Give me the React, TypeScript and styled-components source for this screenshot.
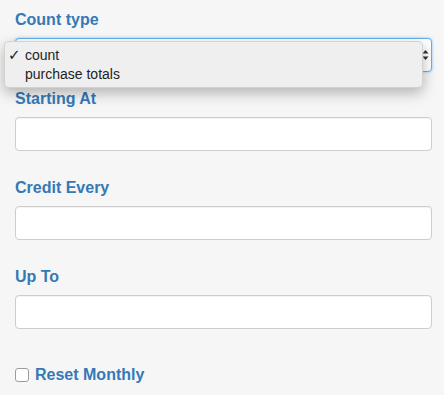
import styled, { createGlobalStyle } from 'styled-components';

const GlobalStyle = createGlobalStyle`
  html, body {
    margin: 0;
    padding: 0;
    background: #f6f6f6;
  }
  body {
    font-family: "Liberation Sans", Arial, sans-serif;
  }
`;

const Page = styled.form`
  position: relative;
  width: 444px;
  height: 395px;
  box-sizing: border-box;
  padding: 10px 12px 0 15px;
  display: flex;
  flex-direction: column;
`;

const Group = styled.div<{ $gap: number }>`
  display: flex;
  flex-direction: column;
  margin-bottom: ${(p) => p.$gap}px;
`;

const Label = styled.label`
  font-size: 16px;
  line-height: 20px;
  font-weight: 700;
  color: #3479b7;
  margin-bottom: 8px;
`;

const Input = styled.input`
  box-sizing: border-box;
  height: 34px;
  width: 100%;
  border: 1px solid #cdcdcd;
  border-radius: 4px;
  background: #fff;
  box-shadow: inset 0 1px 1px rgba(0, 0, 0, 0.05);
  outline: none;
`;

const SelectBox = styled.div`
  position: relative;
  box-sizing: border-box;
  height: 34px;
  width: 100%;
  border: 1px solid #66afe9;
  border-radius: 4px;
  background: #fff;
  box-shadow: 0 0 3px rgba(102, 175, 233, 0.7);
`;

const Arrows = styled.svg`
  position: absolute;
  right: 2px;
  top: 10px;
`;

const Menu = styled.ul`
  position: absolute;
  left: 4px;
  top: 41px;
  width: 419px;
  height: 47px;
  box-sizing: border-box;
  margin: 0;
  padding: 4px 0 0;
  list-style: none;
  background: #efefef;
  border: 1px solid rgba(0, 0, 0, 0.12);
  border-radius: 5px;
  box-shadow: 0 5px 14px rgba(0, 0, 0, 0.28);
  z-index: 2;
`;

const Option = styled.li`
  position: relative;
  padding-left: 20px;
  font-size: 14px;
  line-height: 19px;
  color: #1e1e1e;
`;

const Check = styled.span`
  position: absolute;
  left: 3px;
  top: 0;
  font-size: 15px;
  font-weight: 700;
  font-family: "DejaVu Sans", sans-serif;
`;

const CheckRow = styled.label`
  display: flex;
  align-items: center;
  gap: 6px;
  margin-top: 10px;
  font-size: 16px;
  line-height: 20px;
  font-weight: 700;
  color: #3479b7;
`;

const Box = styled.span`
  box-sizing: border-box;
  width: 14px;
  height: 14px;
  border: 1px solid #9d9d9d;
  border-radius: 3px;
  background: #fff;
`;

export default function App() {
  return (
    <>
      <GlobalStyle />
      <Page>
        <Group $gap={17}>
          <Label>Count type</Label>
          <SelectBox>
            <Arrows width="7" height="12" viewBox="0 0 7 12">
              <path d="M0.5 4.5 L3.5 1 L6.5 4.5 Z" fill="#333" />
              <path d="M0.5 7.5 L3.5 11 L6.5 7.5 Z" fill="#333" />
            </Arrows>
          </SelectBox>
        </Group>
        <Menu>
          <Option>
            <Check>✓</Check>count
          </Option>
          <Option>purchase totals</Option>
        </Menu>
        <Group $gap={27}>
          <Label>Starting At</Label>
          <Input />
        </Group>
        <Group $gap={27}>
          <Label>Credit Every</Label>
          <Input />
        </Group>
        <Group $gap={26}>
          <Label>Up To</Label>
          <Input />
        </Group>
        <CheckRow>
          <Box />
          Reset Monthly
        </CheckRow>
      </Page>
    </>
  );
}
